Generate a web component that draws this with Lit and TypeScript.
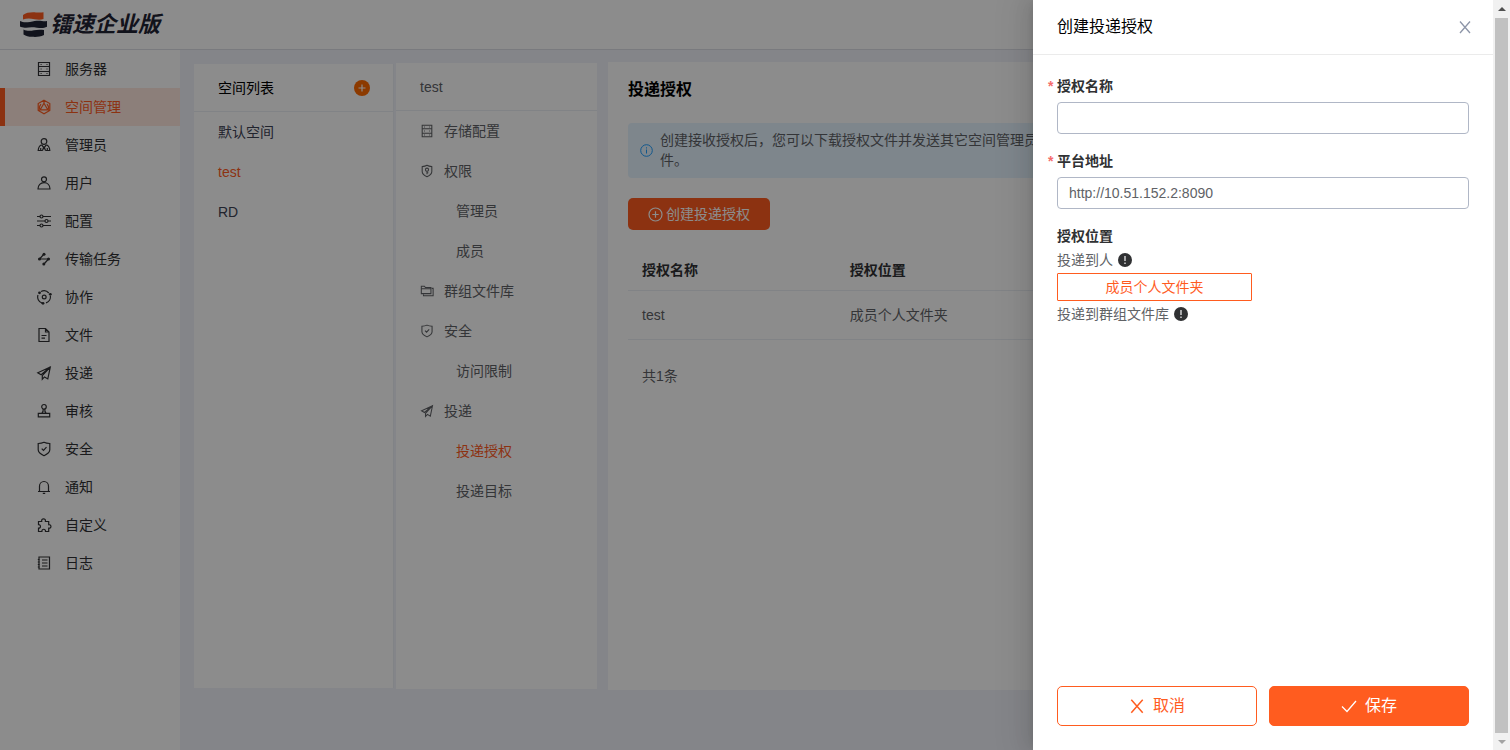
import { LitElement, html, css, svg } from "lit";
import { customElement, property, state } from "lit/decorators.js";
import { classMap } from "lit/directives/class-map.js";

const ICONS: Record<string, unknown> = {
  server: svg`<path d="M2.500 1.500h11v13h-11zM2.500 5.500h11M2.500 10.500h11M4.600 3.500h1M4.600 8h1M4.600 12.500h1M10.500 3.500h1M10.500 8h1M10.500 12.500h1"/>`,
  space: svg`<path d="M8 1.300l5.800 3.300v6.800L8 14.700l-5.800-3.300V4.600zM8 4.200l3.800 6.600H4.200zM8 1.300v2.900M4.200 10.800l-2 .8M11.800 10.800l2 .8M5 5.200a5 5 0 0 0-1 5.600M11 5.200a5 5 0 0 1 1 5.600"/>`,
  admin: svg`<circle cx="8" cy="4.500" r="2.800"/><path d="M5.800 7.800C3.500 8.600 2.400 10.500 2.200 13.500h4.300M10.200 7.800c2.300.8 3.400 2.700 3.600 5.700H9.500M6 8.200l2 3 2-3M8 9.500l-1.500 4M8 9.500l1.500 4M4.700 11v2.500M11.300 11v2.500"/>`,
  user: svg`<circle cx="8" cy="4.300" r="2.500"/><path d="M2 14c0-3.800 2.600-6.300 6-6.300s6 2.500 6 6.300z"/>`,
  sliders: svg`<path d="M1 3.500h3M7 3.500h8M1 8h8M12 8h3M1 12.500h3M7 12.500h8"/><circle cx="5.500" cy="3.500" r="1.500"/><circle cx="10.500" cy="8" r="1.500"/><circle cx="5.500" cy="12.500" r="1.500"/>`,
  transfer: svg`<path d="M8 3L3.500 8h9L8 13"/><g fill="currentColor" stroke="none"><circle cx="8" cy="3.200" r="1.500"/><circle cx="3.500" cy="8" r="1.500"/><circle cx="12.500" cy="8" r="1.500"/><circle cx="7.800" cy="13" r="1.500"/></g>`,
  collab: svg`<path d="M5 2.500A6.300 6.300 0 0 1 12.800 4M14.300 6.800a6.300 6.300 0 0 1-4.300 7.100M6.200 14.100A6.300 6.300 0 0 1 2 6"/><circle cx="8.200" cy="8" r="1.900"/><g fill="currentColor" stroke="none"><circle cx="3.500" cy="3.800" r="1.400"/><circle cx="14.300" cy="5.300" r="1.400"/><circle cx="7" cy="14.300" r="1.400"/></g>`,
  file: svg`<path d="M9.500 1.500H3v13h10V5zM9.500 1.500V5H13M5.500 8.500h5M5.500 11.200h3.500"/>`,
  plane: svg`<path d="M14.300 2L1.800 7.800l3.300 1.900L14.300 2l-8 8.700v3.500l2.200-2.300 3.300 2z"/>`,
  stamp: svg`<circle cx="8" cy="3.800" r="2.300"/><path d="M7.200 6c.2 1.800-.2 3-1.200 4M8.800 6c-.2 1.800.2 3 1.200 4M2.300 10.300h11.400v3.500H2.300z"/>`,
  shield: svg`<path d="M8 1.300c1.800.9 3.700 1.200 5.800 1.200v6.300c0 2.400-2.300 4.300-5.800 5.900-3.500-1.600-5.800-3.500-5.800-5.900V2.500c2.100 0 4-.3 5.800-1.200zM5.700 7.600l1.800 1.800 3-3.200"/>`,
  bell: svg`<path d="M3.500 12.300V7.300a4.500 4.800 0 0 1 9 0v5M2 12.500h12M6.800 14.300h2.400"/>`,
  puzzle: svg`<path d="M2.500 4.500h3.200c-.7-3.600 4.400-3.600 3.700 0h3.300v3.200c3-.5 3 4 0 3.500v3.300H9.500c.5-3-4.100-3-3.600 0H2.500v-3.300c2.600.3 2.600-3.800 0-3.500z"/>`,
  log: svg`<path d="M3 2h10.500v12H3zM6 5h5.500M6 8h5.500M6 11h5.500M1.800 4.500h2M1.800 7h2M1.800 9.500h2M1.800 12h2"/>`,
  key: svg`<path d="M8 1.500c1.600.9 3.400 1.300 5.500 1.500v5.500c0 2.700-2.300 4.600-5.500 6-3.200-1.400-5.500-3.300-5.500-6V3c2.100-.2 3.900-.6 5.500-1.500z"/><circle cx="8" cy="6.500" r="1.800"/><path d="M8 8.300v3.400M8 10h1.500"/>`,
  folders: svg`<path d="M1.500 2.500H5L6.200 4h6.300v7h-11zM1.500 5.500h11M13.500 5h1.500v8.500H4v-1.500"/>`,
};

@customElement("line-icon")
class LineIcon extends LitElement {
  @property() name = "server";
  static styles = css`
    :host { display: inline-flex; width: 16px; height: 16px; flex: none; }
    svg { width: 100%; height: 100%; fill: none; stroke: currentColor; stroke-width: 1.2; }
  `;
  render() {
    return html`<svg viewBox="0 0 16 16" aria-hidden="true">${ICONS[this.name]}</svg>`;
  }
}

@customElement("app-root")
class AppRoot extends LitElement {
  @state() private platform = "http://10.51.152.2:8090";

  private nav = [
    ["server", "服务器"], ["space", "空间管理"], ["admin", "管理员"], ["user", "用户"],
    ["sliders", "配置"], ["transfer", "传输任务"], ["collab", "协作"], ["file", "文件"],
    ["plane", "投递"], ["stamp", "审核"], ["shield", "安全"], ["bell", "通知"],
    ["puzzle", "自定义"], ["log", "日志"],
  ];

  private menu = [
    ["server", "存储配置"], ["key", "权限"], ["", "管理员"], ["", "成员"],
    ["folders", "群组文件库"], ["shield", "安全"], ["", "访问限制"],
    ["plane", "投递"], ["", "投递授权"], ["", "投递目标"],
  ];

  static styles = css`
    * { box-sizing: border-box; }
    :host {
      display: flex;
      height: 100vh;
      overflow: hidden;
      font: 14px/20px "Liberation Sans", "Noto Sans CJK SC", sans-serif;
      color: #606266;
      --brand: #ff5c1f;
      --line: #ebeef5;
    }
    a { color: inherit; text-decoration: none; }
    button, input { font: inherit; }
    h1, h2, p { margin: 0; }

    .page { position: relative; flex: 1; min-width: 0; display: flex; flex-direction: column; overflow: hidden; }
    .top {
      height: 50px; flex: none; display: flex; align-items: center; gap: 3px;
      padding: 0 20px; border-bottom: 1px solid #dcdfe6; background: #fff;
    }
    .mark { width: 27px; height: 25px; }
    .brand { font-size: 22px; line-height: 28px; font-weight: 700; font-style: italic; color: #1f2333; }
    .body { flex: 1; min-height: 0; display: flex; background: #f0f2fa; }
    .side { width: 180px; flex: none; background: #fff; color: #303133; }
    .side a {
      display: flex; align-items: center; gap: 13px; height: 38px;
      padding-left: 31px; border-left: 5px solid transparent;
    }
    .side a.on { background: #ffe8df; border-color: var(--brand); color: var(--brand); }

    .main { flex: 1; min-width: 0; display: flex; padding: 12px 14px 60px; }
    .col { background: #fff; flex: none; }
    .col-head {
      height: 48px; display: flex; align-items: center; justify-content: space-between;
      padding: 0 23px 0 24px; border-bottom: 1px solid var(--line);
    }
    .spaces { width: 200px; margin: 2px 2px 2px 0; border-right: 1px solid var(--line); color: #3d4254; }
    .spaces h2 { font-size: 14px; font-weight: 400; color: #000; }
    .plus { width: 16px; height: 16px; padding: 0; border: 0; background: none; display: flex; }
    .plus svg { width: 16px; height: 16px; }
    .spaces a { display: flex; align-items: center; height: 40px; padding-left: 24px; }
    .spaces a.on, .menu a.on { color: var(--brand); }
    .menu { width: 201px; margin: 1px 11px 1px 0; }
    .menu a { display: flex; align-items: center; gap: 10px; height: 40px; padding-left: 24px; }
    .menu a.sub { padding-left: 60px; }
    .menu line-icon { width: 14px; height: 14px; }

    .content { flex: 1; min-width: 0; background: #fff; padding: 18px 20px; }
    .content h1 { font-size: 16px; line-height: 20px; font-weight: 700; color: #000; }
    .tip {
      display: flex; align-items: center; gap: 7px; margin: 23px 0 20px;
      padding: 7px 12px 8px; border-radius: 4px; background: #e6f4ff;
    }
    .tip svg { width: 13px; height: 13px; flex: none; }
    .create {
      display: flex; align-items: center; gap: 3px; height: 32px; padding: 0 20px;
      border: 0; border-radius: 5px; background: var(--brand); color: #fff;
    }
    .create svg { width: 15px; height: 15px; }
    table { width: 100%; margin-top: 20px; table-layout: fixed; border-collapse: collapse; text-align: left; }
    th, td { padding: 0 14px; border-bottom: 1px solid var(--line); }
    th { height: 40px; font-weight: 700; color: #303133; }
    td { height: 49px; }
    .total { padding: 26px 14px; }

    .mask { position: absolute; inset: 0; background: rgba(0, 0, 0, 0.45); }
    .drawer {
      position: absolute; top: 0; right: 0; bottom: 0; width: 460px; max-width: 100%;
      display: flex; flex-direction: column; background: #fff;
      box-shadow: -6px 0 16px rgba(0, 0, 0, 0.08), -3px 0 6px -4px rgba(0, 0, 0, 0.12),
        -9px 0 28px 8px rgba(0, 0, 0, 0.05);
    }
    .drawer-head {
      height: 55px; flex: none; display: flex; align-items: center; justify-content: space-between;
      padding: 0 21px 0 24px; border-bottom: 1px solid #ebebeb;
    }
    .drawer-head h2 { font-size: 16px; line-height: 24px; font-weight: 400; color: #000; }
    .close { width: 14px; height: 14px; padding: 0; border: 0; background: none; color: #8d95a8; display: flex; }
    .form { flex: 1; display: flex; flex-direction: column; padding: 21px 24px; }
    .label { color: #303133; font-weight: 700; line-height: 20px; margin-bottom: 6px; }
    .req { position: relative; }
    .req::before { content: "*"; position: absolute; left: -9px; color: #f56c6c; }
    .field {
      width: 100%; height: 32px; margin-bottom: 17px; padding: 0 11px;
      border: 1px solid #b0b7c6; border-radius: 4px; background: #fff; color: #606266; outline: 0;
    }
    .label.plain { margin-bottom: 4px; }
    .line { display: flex; align-items: center; gap: 5px; }
    .line svg { width: 14px; height: 14px; }
    .folder {
      width: 195px; height: 28px; margin: 3px 0; padding: 0; border: 1px solid var(--brand);
      border-radius: 1px; background: #fff; color: var(--brand);
    }
    .foot { display: flex; gap: 12px; padding: 24px; }
    .foot button {
      flex: 1; height: 40px; display: flex; align-items: center; justify-content: center; gap: 8px;
      border: 1px solid var(--brand); border-radius: 5px; background: #fff; color: var(--brand);
      font-size: 16px;
    }
    .foot .save { background: var(--brand); color: #fff; }
    .foot svg { width: 16px; height: 16px; }

    .scroll {
      width: 17px; flex: none; display: flex; flex-direction: column; align-items: center;
      background: #f1f1f1;
    }
    .scroll svg { width: 17px; height: 17px; flex: none; }
    .thumb { width: 13px; flex: 1; margin: 1px 0 0; background: #c1c1c1; }
  `;

  private cross() {
    return html`<svg viewBox="0 0 14 14" fill="none" stroke="currentColor" stroke-width="1.3" aria-hidden="true"><path d="M2 1.500L12 13M12 1.500L2 13"/></svg>`;
  }

  private bang() {
    return html`<svg viewBox="0 0 14 14" aria-hidden="true"><circle cx="7" cy="7" r="7" fill="#303133"/><path d="M7 3v5M7 9.500v1.500" stroke="#ddd" stroke-width="1.400"/></svg>`;
  }

  render() {
    return html`
      <div class="page">
        <header class="top">
          <svg class="mark" viewBox="0 0 27 25" aria-hidden="true">
            <path fill="#ff5c1f" d="M3 3C6 .6 11 0 16 .4c3 .2 5 .3 7.500-.1V7c-2.500 1-6 .8-9 .2C10 6.300 6.500 6.300 3 7.500z"/>
            <path fill="#1f2333" d="M0 9c3 1.600 6 1.500 10 .9 5-.9 8-1.600 12-.8 2 .4 3.500.3 5-.1v5.800c-3 1.600-6 1.500-10 .9-5-.8-8-.4-11 0-2.500.2-4.500-.2-6-1.100z"/>
            <path fill="#1f2333" d="M3.500 17.500c3.500 1.800 7 1.500 10.500.8 3-.6 6.500-.8 10-.2v5C20 25 16 25 12 24.800c-3.500-.2-6-.8-8.500-2.400z"/>
          </svg>
          <span class="brand">镭速企业版</span>
        </header>
        <div class="body">
          <nav class="side">
            ${this.nav.map(([icon, text], i) => html`
              <a href="#" class=${classMap({ on: i === 1 })}><line-icon name=${icon}></line-icon>${text}</a>`)}
          </nav>
          <main class="main">
            <section class="col spaces">
              <div class="col-head">
                <h2>空间列表</h2>
                <button class="plus" aria-label="添加">
                  <svg viewBox="0 0 16 16"><circle cx="8" cy="8" r="8" fill="#ff6a00"/><path d="M8 4.500v7M4.500 8h7" stroke="#fff" stroke-width="1.200"/></svg>
                </button>
              </div>
              <a href="#">默认空间</a>
              <a href="#" class="on">test</a>
              <a href="#">RD</a>
            </section>
            <section class="col menu">
              <div class="col-head">test</div>
              ${this.menu.map(([icon, text]) => html`
                <a href="#" class=${classMap({ sub: !icon, on: text === "投递授权" })}>
                  ${icon ? html`<line-icon name=${icon}></line-icon>` : ""}${text}
                </a>`)}
            </section>
            <section class="content">
              <h1>投递授权</h1>
              <div class="tip">
                <svg viewBox="0 0 13 13" fill="none" stroke="#1e9fff" aria-hidden="true"><circle cx="6.500" cy="6.500" r="5.800"/><path d="M6.500 5.500v4M6.500 3.300v1.200"/></svg>
                <p>创建接收授权后，您可以下载授权文件并发送其它空间管理员<br />件。</p>
              </div>
              <button class="create">
                <svg viewBox="0 0 15 15" fill="none" stroke="currentColor" stroke-width="1.200" aria-hidden="true"><circle cx="7.500" cy="7.500" r="6.500"/><path d="M7.500 4.300v6.400M4.300 7.500h6.400"/></svg>
                创建投递授权
              </button>
              <table>
                <thead><tr><th>授权名称</th><th>授权位置</th><th></th><th></th></tr></thead>
                <tbody><tr><td>test</td><td>成员个人文件夹</td><td></td><td></td></tr></tbody>
              </table>
              <p class="total">共1条</p>
            </section>
          </main>
        </div>

        <div class="mask"></div>
        <aside class="drawer" role="dialog" aria-labelledby="title">
          <div class="drawer-head">
            <h2 id="title">创建投递授权</h2>
            <button class="close" aria-label="关闭">${this.cross()}</button>
          </div>
          <div class="form">
            <label class="label req" for="name">授权名称</label>
            <input class="field" id="name" type="text" />
            <label class="label req" for="address">平台地址</label>
            <input class="field" id="address" type="text" .value=${this.platform} />
            <p class="label plain">授权位置</p>
            <p class="line">投递到人${this.bang()}</p>
            <button class="folder">成员个人文件夹</button>
            <p class="line">投递到群组文件库${this.bang()}</p>
          </div>
          <div class="foot">
            <button>${this.cross()}取消</button>
            <button class="save">
              <svg viewBox="0 0 16 16" fill="none" stroke="currentColor" stroke-width="1.300" aria-hidden="true"><path d="M1 8.500l5 5L15 3"/></svg>保存
            </button>
          </div>
        </aside>
      </div>
      <div class="scroll" aria-hidden="true">
        <svg viewBox="0 0 17 17"><path d="M5 11h8L9 7z" fill="#505050"/></svg>
        <div class="thumb"></div>
        <svg viewBox="0 0 17 17"><path d="M5 7h8l-4 4z" fill="#a3a3a3"/></svg>
      </div>
    `;
  }
}
